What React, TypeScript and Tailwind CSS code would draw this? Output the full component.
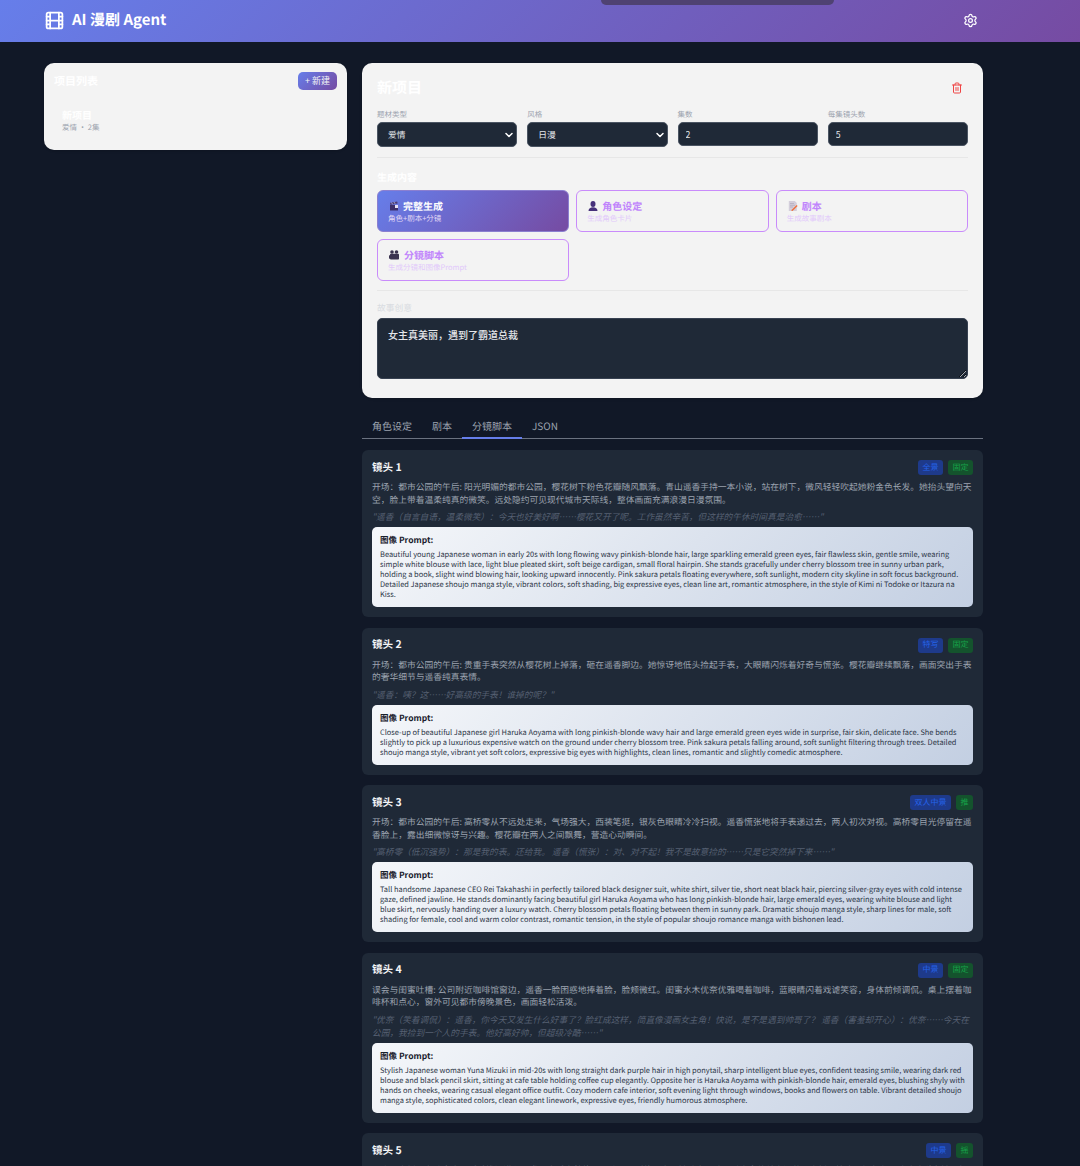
import { Film, Settings, Trash2, ChevronDown } from 'lucide-react';

function ClapperIcon() {
  return (
    <svg viewBox="0 0 10 10" className="w-[10px] h-[10px] shrink-0">
      <path d="M1 4h8v5.5H1z" fill="#3d2f6b" />
      <path d="M1 1.8 8.2.4l.5 2.2L1.4 4z" fill="#4a3c78" />
      <path d="M6 4h3v3H6z" fill="#e8e2f5" />
      <path d="M2.5 1.5 3.7 3.4M5 1 6.2 2.9" stroke="#e8e2f5" strokeWidth="0.6" />
    </svg>
  );
}

function PersonIcon() {
  return (
    <svg viewBox="0 0 10 10" className="w-[10px] h-[10px] shrink-0">
      <ellipse cx="5" cy="3.1" rx="2.5" ry="3" fill="#46317a" />
      <path d="M0.5 10c0-2.6 2-3.8 4.5-3.8s4.500 1.200 4.500 3.800z" fill="#46317a" />
    </svg>
  );
}

function MemoIcon() {
  return (
    <svg viewBox="0 0 10 10" className="w-[10px] h-[10px] shrink-0">
      <path d="M.8 0h6l2 2v8h-8z" fill="#d3cedb" />
      <path d="M2 2.500h4M2 4.300h5M2 6h3" stroke="#a9a3b5" strokeWidth="0.6" />
      <path d="M3.200 9.300 8.600 4l1 1-5.300 5.200z" fill="#f0703c" />
    </svg>
  );
}

function CameraIcon() {
  return (
    <svg viewBox="0 0 11 10" className="w-[11px] h-[10px] shrink-0">
      <circle cx="3" cy="2" r="1.800" fill="#3b3350" />
      <circle cx="7.500" cy="2" r="1.800" fill="#3b3350" />
      <rect x="1" y="3.800" width="9" height="5.700" rx="0.8" fill="#3b3350" />
      <path d="M0 5l1.500 1v2L0 9z" fill="#3b3350" />
    </svg>
  );
}

const modes = [
  { icon: <ClapperIcon />, title: '完整生成', desc: '角色+剧本+分镜', active: true },
  { icon: <PersonIcon />, title: '角色设定', desc: '生成角色卡片', active: false },
  { icon: <MemoIcon />, title: '剧本', desc: '生成故事剧本', active: false },
  { icon: <CameraIcon />, title: '分镜脚本', desc: '生成分镜和图像Prompt', active: false },
];

const shots = [
  {
    title: '镜头 1',
    tags: ['全景', '固定'],
    desc: '开场：都市公园的午后: 阳光明媚的都市公园，樱花树下粉色花瓣随风飘落。青山遥香手持一本小说，站在树下，微风轻轻吹起她粉金色长发。她抬头望向天空，脸上带着温柔纯真的微笑。远处隐约可见现代城市天际线，整体画面充满浪漫日漫氛围。',
    line: '"遥香（自言自语，温柔微笑）：今天也好美好啊……樱花又开了呢。工作虽然辛苦，但这样的午休时间真是治愈……"',
    prompt:
      'Beautiful young Japanese woman in early 20s with long flowing wavy pinkish-blonde hair, large sparkling emerald green eyes, fair flawless skin, gentle smile, wearing simple white blouse with lace, light blue pleated skirt, soft beige cardigan, small floral hairpin. She stands gracefully under cherry blossom tree in sunny urban park, holding a book, slight wind blowing hair, looking upward innocently. Pink sakura petals floating everywhere, soft sunlight, modern city skyline in soft focus background. Detailed Japanese shoujo manga style, vibrant colors, soft shading, big expressive eyes, clean line art, romantic atmosphere, in the style of Kimi ni Todoke or Itazura na Kiss.',
  },
  {
    title: '镜头 2',
    tags: ['特写', '固定'],
    desc: '开场：都市公园的午后: 贵重手表突然从樱花树上掉落，砸在遥香脚边。她惊讶地低头捡起手表，大眼睛闪烁着好奇与慌张。樱花瓣继续飘落，画面突出手表的奢华细节与遥香纯真表情。',
    line: '"遥香：咦？这……好高级的手表！谁掉的呢？"',
    prompt:
      'Close-up of beautiful Japanese girl Haruka Aoyama with long pinkish-blonde wavy hair and large emerald green eyes wide in surprise, fair skin, delicate face. She bends slightly to pick up a luxurious expensive watch on the ground under cherry blossom tree. Pink sakura petals falling around, soft sunlight filtering through trees. Detailed shoujo manga style, vibrant yet soft colors, expressive big eyes with highlights, clean lines, romantic and slightly comedic atmosphere.',
  },
  {
    title: '镜头 3',
    tags: ['双人中景', '推'],
    desc: '开场：都市公园的午后: 高桥零从不远处走来，气场强大，西装笔挺，银灰色眼睛冷冷扫视。遥香慌张地将手表递过去，两人初次对视。高桥零目光停留在遥香脸上，露出细微惊讶与兴趣。樱花瓣在两人之间飘舞，营造心动瞬间。',
    line: '"高桥零（低沉强势）：那是我的表。还给我。 遥香（慌张）：对、对不起！我不是故意捡的……只是它突然掉下来……"',
    prompt:
      'Tall handsome Japanese CEO Rei Takahashi in perfectly tailored black designer suit, white shirt, silver tie, short neat black hair, piercing silver-gray eyes with cold intense gaze, defined jawline. He stands dominantly facing beautiful girl Haruka Aoyama who has long pinkish-blonde hair, large emerald eyes, wearing white blouse and light blue skirt, nervously handing over a luxury watch. Cherry blossom petals floating between them in sunny park. Dramatic shoujo manga style, sharp lines for male, soft shading for female, cool and warm color contrast, romantic tension, in the style of popular shoujo romance manga with bishonen lead.',
  },
  {
    title: '镜头 4',
    tags: ['中景', '固定'],
    desc: '误会与闺蜜吐槽: 公司附近咖啡馆窗边，遥香一脸困惑地捧着脸，脸颊微红。闺蜜水木优奈优雅喝着咖啡，蓝眼睛闪着戏谑笑容，身体前倾调侃。桌上摆着咖啡杯和点心，窗外可见都市傍晚景色，画面轻松活泼。',
    line: '"优奈（笑着调侃）：遥香，你今天又发生什么好事了？脸红成这样，简直像漫画女主角！快说，是不是遇到帅哥了？ 遥香（害羞却开心）：优奈……今天在公园，我捡到一个人的手表。他好高好帅，但超级冷酷……"',
    prompt:
      'Stylish Japanese woman Yuna Mizuki in mid-20s with long straight dark purple hair in high ponytail, sharp intelligent blue eyes, confident teasing smile, wearing dark red blouse and black pencil skirt, sitting at cafe table holding coffee cup elegantly. Opposite her is Haruka Aoyama with pinkish-blonde hair, emerald eyes, blushing shyly with hands on cheeks, wearing casual elegant office outfit. Cozy modern cafe interior, soft evening light through windows, books and flowers on table. Vibrant detailed shoujo manga style, sophisticated colors, clean elegant linework, expressive eyes, friendly humorous atmosphere.',
  },
  {
    title: '镜头 5',
    tags: ['中景', '摇'],
    desc: '误会：高桥零办公室内，遥香推门进入，发现桌后坐着的正是公园遇到的男人。她瞪大眼睛，手中文件差点滑落。高桥零抬头，银灰色眼睛冷冷看向她，气氛瞬间凝固，窗外是繁华都市天际线，画面张力十足。',
    line: '"遥香：怎、怎么会是你！"',
    prompt: 'Haruka Aoyama entering a modern CEO office, shocked expression, Rei Takahashi behind the desk.',
  },
];

function FieldLabel({ children }: { children: React.ReactNode }) {
  return <label className="block text-[7.5px] leading-[12px] text-[#9ca3af] mb-px">{children}</label>;
}

function SelectBox({ value }: { value: string }) {
  return (
    <div className="h-[25px] flex items-center justify-between pl-[10px] pr-[1px] rounded-[5px] bg-[#1f2937] border border-[#4b5563] text-[8.75px] text-[#e5e7eb]">
      <span>{value}</span>
      <ChevronDown size={12} strokeWidth={3} className="text-white" />
    </div>
  );
}

function InputBox({ value }: { value: string }) {
  return (
    <input
      readOnly
      value={value}
      className="block w-full h-[24px] px-[7px] rounded-[5px] bg-[#1f2937] border border-[#4b5563] text-[8.75px] text-[#e5e7eb] outline-none"
    />
  );
}

function ModeButton({ icon, title, desc, active }: (typeof modes)[number]) {
  return (
    <div
      className={
        active
          ? 'h-[42px] px-[10px] flex flex-col justify-center rounded-[6px] bg-[linear-gradient(135deg,#667eea,#764ba2)] border border-[#8b7fd0]'
          : 'h-[42px] px-[10px] flex flex-col justify-center rounded-[6px] border-[1.25px] border-[#c98bfb]'
      }
    >
      <div className={active ? 'flex items-center gap-[4px] pl-px text-[10px] leading-[14px] font-bold text-white' : 'flex items-center gap-[4px] pl-px text-[10px] leading-[14px] font-bold text-[#c084fc]'}>
        {icon}
        <span>{title}</span>
      </div>
      <div className={active ? 'text-[7.5px] leading-[11px] text-[#e2d9f5]' : 'text-[7.5px] leading-[11px] text-[#e2c9fb]'}>{desc}</div>
    </div>
  );
}

function ShotCard({ title, tags, desc, line, prompt }: (typeof shots)[number]) {
  return (
    <div className="rounded-[6px] bg-[#1f2937] px-[10px] pt-[10px] pb-[10px]">
      <div className="flex items-center justify-between h-[15px]">
        <h4 className="text-[10.5px] font-bold text-[#f3f4f6]">{title}</h4>
        <div className="flex gap-[5px]">
          <span className="h-[15px] px-[4.5px] flex items-center rounded-[3px] bg-[#1e3a8a] text-[8px] text-[#2563eb]">{tags[0]}</span>
          <span className="h-[15px] px-[4.5px] flex items-center rounded-[3px] bg-[#14532d] text-[8px] text-[#16a34a]">{tags[1]}</span>
        </div>
      </div>
      <p className="mt-[6px] text-[8.75px] leading-[12.5px] text-[#9ca3af]">{desc}</p>
      <p className="mt-[4px] text-[8.7px] leading-[13px] italic text-[#566072]">{line}</p>
      <div className="mt-[4px] rounded-[5px] bg-[linear-gradient(135deg,#f5f7fa,#c3cfe2)] px-[8px] py-[7px]">
        <div className="text-[8.5px] leading-[13px] font-semibold text-[#1a202c] mb-[3px]">图像 Prompt:</div>
        <p className="text-[7.45px] leading-[10px] text-[#2d3748]">{prompt}</p>
      </div>
    </div>
  );
}

export default function App() {
  return (
    <div className="min-h-screen bg-[#111827] font-['Noto_Sans_CJK_SC','Noto_Sans',sans-serif] [text-rendering:geometricPrecision]">
      <header className="relative h-[42px] flex items-center justify-between pl-[44px] pr-[102px] pb-px bg-[linear-gradient(135deg,#667eea,#764ba2)]">
        <div className="flex items-center gap-[7px] text-white">
          <Film size={21} strokeWidth={2} />
          <h1 className="text-[15px] font-bold">AI 漫剧 Agent</h1>
        </div>
        <Settings size={15} strokeWidth={2} className="text-white" />
        <div className="absolute left-[601px] top-0 w-[233px] h-[5px] rounded-b-[8px] bg-[#4f4272]" />
      </header>

      <div className="flex items-start gap-[15px] pl-[44px] pt-[21px]">
        <aside className="w-[303px] h-[87px] shrink-0 rounded-[10px] bg-[#f3f3f3] px-[10px] pt-[9px] shadow">
          <div className="flex items-center justify-between">
            <h2 className="text-[11px] font-bold text-white">项目列表</h2>
            <button className="h-[18px] px-[7px] rounded-[5px] bg-[linear-gradient(135deg,#667eea,#764ba2)] text-[9px] text-[#f3f4f6]">+ 新建</button>
          </div>
          <div className="mt-[18px] pl-[8px]">
            <div className="text-[10px] leading-[13px] font-bold text-white">新项目</div>
            <div className="text-[7.5px] leading-[13px] text-[#9ca3af]">爱情 · 2集</div>
          </div>
        </aside>

        <main className="w-[621px] shrink-0">
          <section className="rounded-[10px] bg-[#f3f3f3] px-[15px] pt-[14px] pb-[19px] shadow">
            <div className="flex items-center justify-between h-[22px]">
              <h2 className="text-[15px] font-bold text-white">新项目</h2>
              <Trash2 size={12} strokeWidth={2} className="mr-[5px] text-[#ef4444]" />
            </div>
            <div className="mt-[10px] grid grid-cols-4 gap-[10px]">
              <div>
                <FieldLabel>题材类型</FieldLabel>
                <SelectBox value="爱情" />
              </div>
              <div>
                <FieldLabel>风格</FieldLabel>
                <SelectBox value="日漫" />
              </div>
              <div>
                <FieldLabel>集数</FieldLabel>
                <InputBox value="2" />
              </div>
              <div>
                <FieldLabel>每集镜头数</FieldLabel>
                <InputBox value="5" />
              </div>
            </div>

            <div className="mt-[10px] pt-[12px] border-t border-[#e7e7e7]">
              <div className="text-[10px] leading-[13px] font-semibold text-white">生成内容</div>
              <div className="mt-[7px] grid grid-cols-3 gap-[7px]">
                {modes.map((m) => (
                  <ModeButton key={m.title} {...m} />
                ))}
              </div>
            </div>

            <div className="mt-[9px] pt-[11px] border-t border-[#e7e7e7]">
              <div className="text-[8.75px] leading-[12px] text-[#d9dce1]">故事创意</div>
              <textarea
                readOnly
                value="女主真美丽，遇到了霸道总裁"
                className="block w-full mt-[4px] h-[61px] rounded-[5px] bg-[#1f2937] border border-[#374151] px-[10px] pt-[9px] text-[10px] leading-[14px] font-medium text-[#e5e7eb] outline-none"
              />
            </div>
          </section>

          <nav className="mt-[14px] flex border-b border-[#6b7280] text-[10px] text-[#9ca3af]">
            <span className="px-[10px] pt-[6px] pb-[4px]">角色设定</span>
            <span className="px-[10px] pt-[6px] pb-[4px]">剧本</span>
            <span className="px-[10px] pt-[6px] pb-[4px] -mb-px border-b-2 border-[#667eea]">分镜脚本</span>
            <span className="px-[10px] pt-[6px] pb-[4px]">JSON</span>
          </nav>

          <div className="mt-[11px] flex flex-col gap-[10.6px]">
            {shots.map((s) => (
              <ShotCard key={s.title} {...s} />
            ))}
          </div>
        </main>
      </div>
    </div>
  );
}
